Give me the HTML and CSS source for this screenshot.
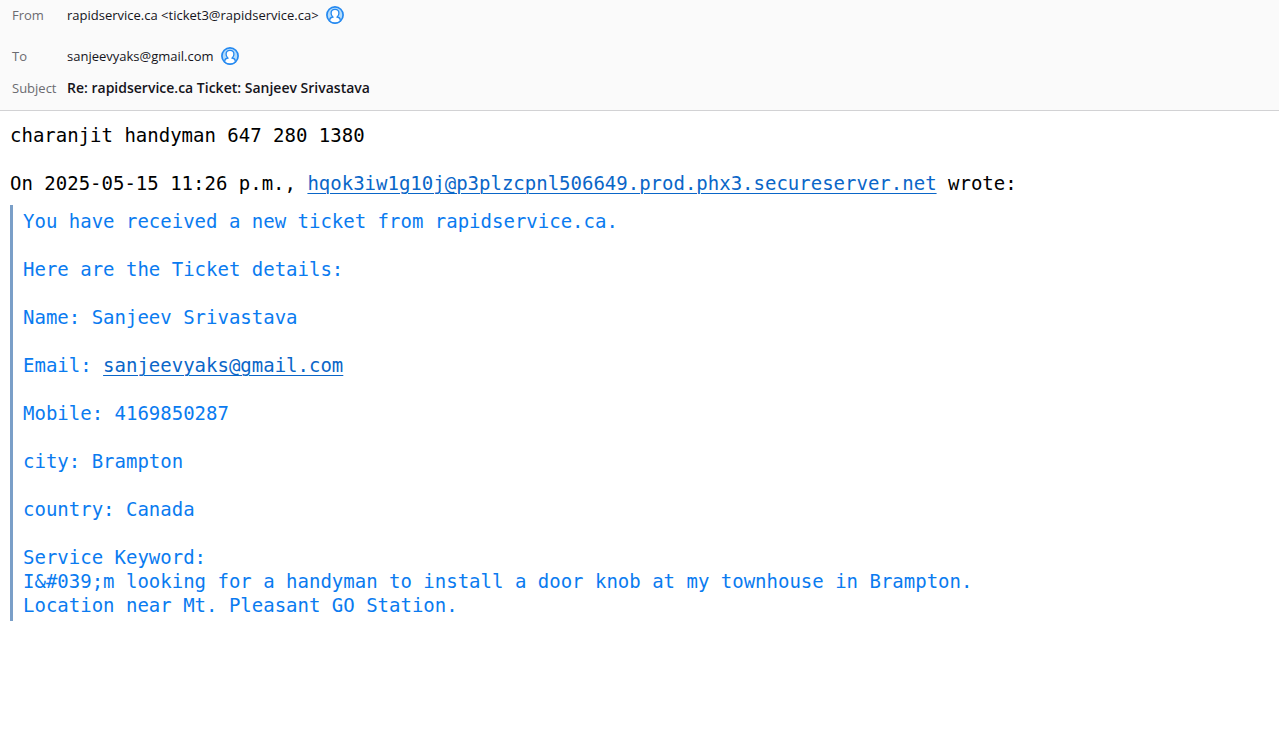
FILE: index.html
```html
<!DOCTYPE html>
<html lang="en">
<head>
    <meta charset="utf-8">
    <title>Re: rapidservice.ca Ticket: Sanjeev Srivastava</title>
    <link rel="stylesheet" href="styles.css">
</head>
<body>
    <header class="headers">
        <div class="row from">
            <span class="label">From</span>
            <span class="value">rapidservice.ca &lt;ticket3@rapidservice.ca&gt;</span>
            <svg class="contact" viewBox="0 0 18 18">
                <circle cx="9" cy="9" r="8.100" fill="#b5dcfb" stroke="#2589f0" stroke-width="1.700"/>
                <path d="M3.800 15.200v-1.400c0-1.500 1-2.300 3-2.800C5.700 9.900 5.100 8.600 5.100 7.300 5.100 5 6.700 3.400 9 3.400s3.900 1.600 3.900 3.900c0 1.300-.6 2.600-1.700 3.700 2 .5 3 1.300 3 2.800v1.400c-1.500 1.200-3.200 1.800-5.200 1.800s-3.700-.6-5.200-1.800z" fill="#fff" stroke="#2589f0" stroke-width="1.300"/>
            </svg>
        </div>
        <div class="row to">
            <span class="label">To</span>
            <span class="value">sanjeevyaks@gmail.com</span>
            <svg class="contact" viewBox="0 0 18 18">
                <circle cx="9" cy="9" r="8.100" fill="#b5dcfb" stroke="#2589f0" stroke-width="1.700"/>
                <path d="M3.800 15.200v-1.400c0-1.500 1-2.300 3-2.800C5.700 9.900 5.100 8.600 5.100 7.300 5.100 5 6.700 3.400 9 3.400s3.900 1.600 3.900 3.900c0 1.300-.6 2.600-1.700 3.700 2 .5 3 1.300 3 2.800v1.400c-1.500 1.200-3.200 1.800-5.200 1.800s-3.700-.6-5.200-1.800z" fill="#fff" stroke="#2589f0" stroke-width="1.300"/>
            </svg>
        </div>
        <div class="row subject">
            <span class="label">Subject</span>
            <h1 class="value">Re: rapidservice.ca Ticket: Sanjeev Srivastava</h1>
        </div>
    </header>
    <main class="message">
        <p>charanjit handyman 647 280 1380</p>
        <p class="cite">On 2025-05-15 11:26 p.m., <a href="mailto:hqok3iw1g10j@p3plzcpnl506649.prod.phx3.secureserver.net">hqok3iw1g10j@p3plzcpnl506649.prod.phx3.secureserver.net</a> wrote:</p>
        <blockquote>
            <p>You have received a new ticket from rapidservice.ca.</p>
            <p>Here are the Ticket details:</p>
            <p>Name: Sanjeev Srivastava</p>
            <p>Email: <a href="mailto:sanjeevyaks@gmail.com">sanjeevyaks@gmail.com</a></p>
            <p>Mobile: 4169850287</p>
            <p>city: Brampton</p>
            <p>country: Canada</p>
            <p>Service Keyword:<br>
            I&amp;#039;m looking for a handyman to install a door knob at my townhouse in Brampton.<br>
            Location near Mt. Pleasant GO Station.</p>
        </blockquote>
    </main>
</body>
</html>
```

FILE: styles.css
```css
body {
    margin: 0;
    background: #fff;
}
.headers {
    padding: 5px 12px 12px;
    background: #fafafa;
    border-bottom: 1px solid #d2d2d4;
    font-family: "Open Sans", "Noto Sans", sans-serif;
    font-size: 13px;
    line-height: 20px;
    color: #15141a;
}
.row {
    display: flex;
    align-items: center;
    min-height: 20px;
}
.to {
    margin-top: 21px;
}
.subject {
    margin-top: 12px;
}
.label {
    width: 55px;
    color: #6b6b70;
}
.value {
    margin: 0;
}
h1.value {
    font-size: 14px;
    font-weight: 600;
}
.contact {
    width: 18px;
    height: 18px;
    margin-left: 7px;
}
.message {
    padding: 12px 10px;
    font-family: "DejaVu Sans Mono", monospace;
    font-size: 19px;
    line-height: 24px;
    color: #000;
}
.message p {
    margin: 0 0 24px;
}
.message .cite {
    margin-bottom: 10px;
}
.message a {
    color: #0a66c8;
    text-decoration-thickness: 1px;
    text-underline-offset: 3px;
}
blockquote {
    margin: 0;
    padding: 4px 10px;
    border-left: 3px solid #7a9fc8;
    color: #0a7bf0;
}
.message blockquote p:last-child {
    margin-bottom: 0;
}
```
